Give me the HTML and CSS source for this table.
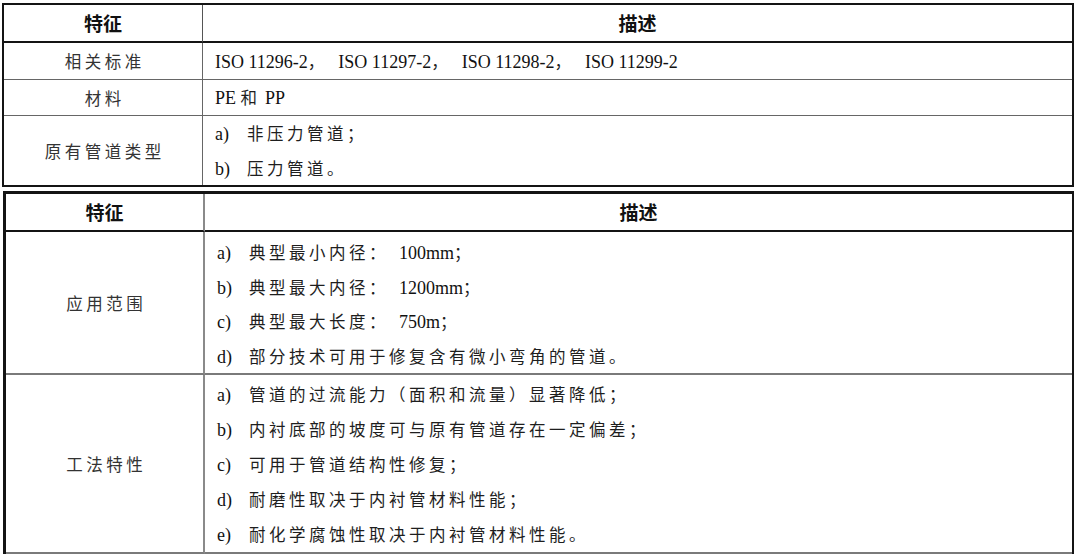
FILE: index.html
```html
<!DOCTYPE html>
<html lang="zh">
<head>
<meta charset="utf-8">
<title>特征与描述</title>
<link rel="stylesheet" href="styles.css">
</head>
<body>
<div class="page">
  <table class="t t1">
    <colgroup><col class="c1"><col class="c2"></colgroup>
    <thead>
      <tr><th class="hk">特征</th><th class="hv">描述</th></tr>
    </thead>
    <tbody>
      <tr>
        <td class="k">相关标准</td>
        <td class="v"><div class="li h36"><span class="lat">ISO 11296-2</span><span class="cm">，</span><span class="lat">ISO 11297-2</span><span class="cm">，</span><span class="lat">ISO 11298-2</span><span class="cm">，</span><span class="lat">ISO 11299-2</span></div></td>
      </tr>
      <tr>
        <td class="k">材料</td>
        <td class="v"><div class="li"><span class="lat">PE&nbsp;</span>和<span class="lat">&nbsp;PP</span></div></td>
      </tr>
      <tr class="last">
        <td class="k">原有管道类型</td>
        <td class="v">
          <div class="li"><span class="m">a)</span>非压力管道；</div>
          <div class="li"><span class="m">b)</span>压力管道。</div>
        </td>
      </tr>
    </tbody>
  </table>

  <table class="t t2">
    <colgroup><col class="c1"><col class="c2"></colgroup>
    <thead>
      <tr><th class="hk">特征</th><th class="hv">描述</th></tr>
    </thead>
    <tbody>
      <tr class="grp g1">
        <td class="k">应用范围</td>
        <td class="v">
          <div class="li"><span class="m">a)</span>典型最小内径：<span class="lat gap">100mm</span>；</div>
          <div class="li"><span class="m">b)</span>典型最大内径：<span class="lat gap">1200mm</span>；</div>
          <div class="li"><span class="m">c)</span>典型最大长度：<span class="lat gap">750m</span>；</div>
          <div class="li"><span class="m">d)</span>部分技术可用于修复含有微小弯角的管道。</div>
        </td>
      </tr>
      <tr class="grp g2">
        <td class="k">工法特性</td>
        <td class="v">
          <div class="li"><span class="m">a)</span>管道的过流能力（面积和流量）显著降低；</div>
          <div class="li"><span class="m">b)</span>内衬底部的坡度可与原有管道存在一定偏差；</div>
          <div class="li"><span class="m">c)</span>可用于管道结构性修复；</div>
          <div class="li"><span class="m">d)</span>耐磨性取决于内衬管材料性能；</div>
          <div class="li"><span class="m">e)</span>耐化学腐蚀性取决于内衬管材料性能。</div>
        </td>
      </tr>
      <tr class="more">
        <td class="k"></td>
        <td class="v"></td>
      </tr>
    </tbody>
  </table>
</div>
</body>
</html>
```

FILE: styles.css
```css
html, body {
  margin: 0;
  padding: 0;
  background: #ffffff;
  overflow: hidden;
}

.page {
  padding: 3px 0 0 2px;
}

.t {
  border-collapse: separate;
  border-spacing: 0;
  table-layout: fixed;
  color: #1c1c1c;
  font-family: "Liberation Serif", "Noto Sans CJK SC", serif;
  font-size: 16px;
}

.t1 {
  width: 1072px;
  border: 2px solid #141414;
}

.t2 {
  width: 1071px;
  margin-top: 4px;
  margin-left: 1px;
  border-top: 3px solid #141414;
  border-left: 3px solid #141414;
  border-right: 2px solid #141414;
}

.t1 .c1 { width: 199px; }
.t2 .c1 { width: 199px; }

.t th {
  padding: 0;
  height: 36px;
  line-height: 36px;
  font-family: "Noto Sans CJK SC", sans-serif;
  font-weight: 700;
  font-size: 19px;
  color: #111;
  text-align: center;
  vertical-align: middle;
  border-bottom: 2px solid #141414;
  overflow: hidden;
}

.t th.hk {
  border-right: 1px solid #555;
}

.t2 th.hk {
  border-right: 2px solid #8a8a8a;
}

.t td {
  padding: 0;
  vertical-align: middle;
  border-bottom: 1px solid #666;
}

.t td.k {
  border-right: 1px solid #666;
  text-align: center;
  font-family: "Noto Sans CJK SC", sans-serif;
  font-weight: 400;
  font-size: 16.5px;
  letter-spacing: 3.5px;
  text-indent: 3.5px;
  color: #333;
}

.t2 td.k {
  border-right: 2px solid #8a8a8a;
}

.t1 tr.last td {
  border-bottom: none;
}

.t2 .grp td {
  border-bottom: 2px solid #7a7a7a;
}

.t td.v {
  padding-left: 12px;
  font-family: "Noto Sans CJK SC", sans-serif;
  font-weight: 400;
  font-size: 16.5px;
  letter-spacing: 3.5px;
  color: #1e1e1e;
}

.li {
  display: flex;
  align-items: baseline;
  height: 35px;
  line-height: 35px;
  white-space: nowrap;
  overflow: visible;
}

.li.h36 {
  height: 36px;
  line-height: 36px;
}

.t1 .last .li {
  height: 34.5px;
  line-height: 34.5px;
}

.g1 td.v { padding-top: 3px; }
.g1 .li { height: 34.5px; line-height: 34.5px; }
.g2 td.v { padding-top: 2px; }

.lat {
  font-family: "Liberation Serif", serif;
  font-weight: 400;
  font-size: 18px;
  letter-spacing: 0;
  color: #111;
}

.cm {
  letter-spacing: 14px;
}

.gap {
  margin-left: 10px;
}

.m {
  flex: none;
  width: 32px;
  font-family: "Liberation Serif", serif;
  font-weight: 400;
  font-size: 18px;
  letter-spacing: 0;
  color: #111;
}

.more td {
  height: 30px;
  border-bottom: none;
}
```
